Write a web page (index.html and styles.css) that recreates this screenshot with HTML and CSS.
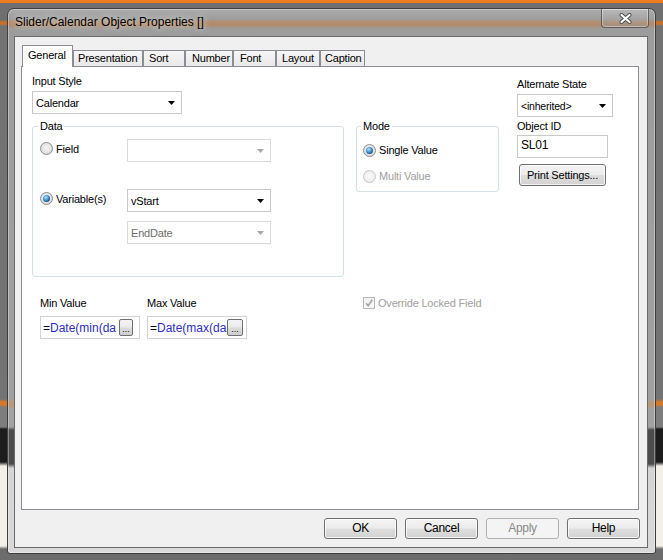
FILE: index.html
```html
<!DOCTYPE html>
<html>
<head>
<meta charset="utf-8">
<title>Slider/Calendar Object Properties</title>
<link rel="stylesheet" href="styles.css">
</head>
<body>
<div class="window">
  <div class="titlebar">
    <div class="title">Slider/Calendar Object Properties []</div>
    <div class="close">
      <svg width="13" height="11" viewBox="0 0 13 11">
        <path d="M2.5 2 L10.5 9 M10.5 2 L2.5 9" stroke="#4a4a4a" stroke-width="4" stroke-linecap="round"/>
        <path d="M2.5 2 L10.5 9 M10.5 2 L2.5 9" stroke="#ffffff" stroke-width="2.2" stroke-linecap="round"/>
      </svg>
    </div>
  </div>
  <div class="client">
    <div class="tabs">
      <div class="tab tab-active w-general">General</div>
      <div class="tab w-presentation">Presentation</div>
      <div class="tab w-sort">Sort</div>
      <div class="tab w-number">Number</div>
      <div class="tab w-font">Font</div>
      <div class="tab w-layout">Layout</div>
      <div class="tab w-caption">Caption</div>
    </div>
    <div class="panel">
      <div class="input-style">
        <div class="label">Input Style</div>
        <div class="combo combo-calendar">
          <span class="combo-text">Calendar</span>
          <svg class="arrow" width="7" height="4" viewBox="0 0 7 4"><polygon points="0,0 7,0 3.5,4" fill="#000"/></svg>
        </div>
      </div>

      <div class="right-col">
        <div class="label">Alternate State</div>
        <div class="combo combo-state">
          <span class="combo-text small">&lt;inherited&gt;</span>
          <svg class="arrow" width="7" height="4" viewBox="0 0 7 4"><polygon points="0,0 7,0 3.5,4" fill="#000"/></svg>
        </div>
        <div class="label label-gap">Object ID</div>
        <div class="textbox">SL01</div>
        <div class="btn btn-print">Print Settings...</div>
      </div>

      <fieldset class="group group-data">
        <legend>Data</legend>
        <div class="data-grid">
          <div class="opt">
            <span class="radio"></span><span class="opt-label">Field</span>
          </div>
          <div class="combo combo-disabled">
            <span class="combo-text"></span>
            <svg class="arrow" width="7" height="4" viewBox="0 0 7 4"><polygon points="0,0 7,0 3.5,4" fill="#a8a8a8"/></svg>
          </div>

          <div class="opt row-var">
            <span class="radio radio-on"></span><span class="opt-label">Variable(s)</span>
          </div>
          <div class="combo row-var">
            <span class="combo-text">vStart</span>
            <svg class="arrow" width="7" height="4" viewBox="0 0 7 4"><polygon points="0,0 7,0 3.5,4" fill="#000"/></svg>
          </div>

          <div class="row-end"></div>
          <div class="combo combo-disabled row-end">
            <span class="combo-text text-disabled">EndDate</span>
            <svg class="arrow" width="7" height="4" viewBox="0 0 7 4"><polygon points="0,0 7,0 3.5,4" fill="#a8a8a8"/></svg>
          </div>
        </div>
      </fieldset>

      <fieldset class="group group-mode">
        <legend>Mode</legend>
        <div class="opt">
          <span class="radio radio-on"></span><span class="opt-label">Single Value</span>
        </div>
        <div class="opt opt-second">
          <span class="radio radio-disabled"></span><span class="opt-label text-disabled2">Multi Value</span>
        </div>
      </fieldset>

      <div class="minmax">
        <div class="mm">
          <div class="label">Min Value</div>
          <div class="expr expr-min">
            <span class="expr-text"><span class="eq">=</span>Date(min(da</span>
            <span class="dots">...</span>
          </div>
        </div>
        <div class="mm">
          <div class="label">Max Value</div>
          <div class="expr expr-max">
            <span class="expr-text"><span class="eq">=</span>Date(max(da</span>
            <span class="dots">...</span>
          </div>
        </div>
      </div>

      <div class="override">
        <span class="checkbox">
          <svg width="10" height="10" viewBox="0 0 10 10"><path d="M2 5.2 L4.2 7.6 L8.2 1.8" fill="none" stroke="#a4a4a4" stroke-width="1.6"/></svg>
        </span>
        <span class="opt-label text-disabled2">Override Locked Field</span>
      </div>
    </div>
    <div class="buttons">
      <div class="btn btn-main">OK</div>
      <div class="btn btn-main">Cancel</div>
      <div class="btn btn-main btn-disabled">Apply</div>
      <div class="btn btn-main">Help</div>
    </div>
  </div>
</div>
</body>
</html>
```

FILE: styles.css
```css
html, body {
  margin: 0;
  padding: 0;
}

body {
  width: 663px;
  height: 560px;
  overflow: hidden;
  box-sizing: border-box;
  padding: 8px 0 0 7px;
  font-family: "Liberation Sans", Arial, sans-serif;
  font-size: 11px;
  letter-spacing: -0.2px;
  color: #000;
  background: linear-gradient(to bottom,
    #ee7c1e 0, #ee7c1e 3px,
    #6f6f6f 3px, #6f6f6f 20px,
    #c8702a 22px, #c8702a 24px,
    #727272 26px, #737373 399px,
    #d57a2a 402px, #d57a2a 405px,
    #7d7d7d 407px, #7d7d7d 427px,
    #1c1c1c 429px, #1c1c1c 462px,
    #f3f0ea 466px, #f3f0ea 546px,
    #6c6c6c 549px, #6c6c6c 560px);
}

/* ---------- window frame ---------- */
.window {
  width: 649px;
  height: 546px;
  box-sizing: border-box;
  border: 1px solid #3e3e3e;
  border-radius: 7px 7px 3px 3px;
  padding: 0 7px 5px 6px;
  display: flex;
  flex-direction: column;
  box-shadow: inset 0 0 0 1px rgba(255, 255, 255, 0.35);
  background: linear-gradient(to bottom,
    #ababab 0, #9d9d9d 10px,
    #b38d6d 13px, #b08a6a 16px,
    #9c9c9c 20px, #a0a0a0 390px,
    #b99878 394px, #b99878 397px,
    #a2a2a2 400px, #a2a2a2 418px,
    #4c4c4c 421px, #4c4c4c 455px,
    #d4d4d4 459px, #d9d9d9 546px);
}

.titlebar {
  height: 27px;
  display: flex;
  align-items: flex-start;
  flex: none;
}

.title {
  margin-top: 5px;
  padding-left: 1px;
  line-height: 16px;
  font-family: "Liberation Sans Narrow", "Liberation Sans", Arial, sans-serif;
  font-size: 12px;
  letter-spacing: 0;
  color: #000;
  text-shadow: 0 0 6px rgba(230, 230, 230, 0.9), 0 0 10px rgba(220, 220, 220, 0.8);
}

.close {
  margin-left: auto;
  margin-right: -1px;
  width: 48px;
  height: 19px;
  box-sizing: border-box;
  border: 1px solid rgba(70, 70, 70, 0.75);
  border-top: none;
  border-radius: 0 0 4px 4px;
  background: linear-gradient(to bottom, rgba(200, 200, 200, 0.45), rgba(150, 150, 150, 0.35));
  box-shadow: inset 0 0 0 1px rgba(255, 255, 255, 0.35);
  display: flex;
  align-items: center;
  justify-content: center;
}

/* ---------- client area ---------- */
.client {
  height: 512px;
  box-sizing: border-box;
  border: 1px solid #6a6a6a;
  background: #f0f0f0;
  padding: 8px 8px 0 6px;
  display: flex;
  flex-direction: column;
}

.tabs {
  height: 21px;
  display: flex;
  align-items: flex-end;
  margin-left: 1px;
  position: relative;
  z-index: 1;
  flex: none;
}

.tab {
  height: 16px;
  box-sizing: border-box;
  border: 1px solid #898c95;
  border-bottom: none;
  padding: 0 0 0 5px;
  line-height: 15px;
  background: linear-gradient(to bottom, #f6f6f6, #e8e8e8);
  white-space: nowrap;
}

.tab-active {
  height: 22px;
  margin-bottom: -1px;
  padding-top: 2px;
  line-height: 14px;
  background: #fff;
}

.w-general { width: 51px; }
.w-presentation { width: 70px; padding-left: 4px; }
.w-sort { width: 42px; }
.w-number { width: 48px; padding-left: 6px; }
.w-font { width: 43px; padding-left: 6px; }
.w-layout { width: 44px; }
.w-caption { width: 45px; padding-left: 4px; }

.panel {
  height: 444px;
  box-sizing: border-box;
  border: 1px solid #898c95;
  background: #fff;
  padding: 7px 0 0 10px;
  display: grid;
  grid-template-columns: 312px 143px 96px;
  grid-template-rows: auto auto auto;
  column-gap: 12px;
  align-content: start;
  align-items: start;
  flex: none;
}

.label {
  line-height: 14px;
  white-space: nowrap;
}

/* ---------- combos & inputs ---------- */
.combo {
  height: 23px;
  box-sizing: border-box;
  border: 1px solid #c9c9c9;
  background: #fff;
  display: flex;
  align-items: center;
  padding: 0 6px 0 3px;
}

.combo-text {
  flex: 1;
  white-space: nowrap;
  overflow: hidden;
}

.combo-text.small {
  font-size: 10.5px;
}

.combo-disabled {
  border-color: #d9d9d9;
}

.text-disabled {
  color: #6d6d6d;
}

.text-disabled2 {
  color: #a0a0a0;
}

.arrow {
  flex: none;
  display: block;
}

.input-style {
  grid-column: 1;
  grid-row: 1;
}

.combo-calendar {
  width: 150px;
  margin-top: 3px;
}

/* ---------- right column ---------- */
.right-col {
  grid-column: 3;
  grid-row: 1 / span 2;
  margin-left: 6px;
  padding-top: 3px;
}

.combo-state {
  width: 96px;
  margin-top: 3px;
}

.label-gap {
  margin-top: 2px;
}

.textbox {
  width: 91px;
  height: 23px;
  box-sizing: border-box;
  border: 1px solid #c9c9c9;
  margin-top: 2px;
  padding: 0 0 0 3px;
  line-height: 19px;
  font-size: 12px;
}

.btn {
  box-sizing: border-box;
  border: 1px solid #707070;
  border-radius: 3px;
  background: linear-gradient(to bottom, #f4f4f4 0%, #ececec 48%, #dedede 52%, #d2d2d2 100%);
  box-shadow: inset 0 0 0 1px rgba(255, 255, 255, 0.75);
  text-align: center;
  white-space: nowrap;
}

.btn-print {
  width: 87px;
  height: 22px;
  line-height: 20px;
  margin: 6px 0 0 2px;
}

/* ---------- group boxes ---------- */
.group {
  margin: 5px 0 0 0;
  padding: 0;
  border: 1px solid #d5dfe5;
  border-radius: 3px;
  min-width: 0;
  box-sizing: border-box;
}

.group legend {
  padding: 0 2px;
  margin-left: -2px;
  line-height: 14px;
}

.group-data {
  grid-column: 1;
  grid-row: 2;
  width: 312px;
  padding: 6px 0 32px 7px;
}

.group-mode {
  grid-column: 2;
  grid-row: 2;
  width: 143px;
  padding: 10px 0 8px 6px;
}

.data-grid {
  display: grid;
  grid-template-columns: 87px 144px;
  align-items: start;
}

.data-grid .combo {
  width: 144px;
}

.opt {
  display: flex;
  align-items: center;
  height: 14px;
  line-height: 14px;
  white-space: nowrap;
}

.data-grid .opt {
  margin-top: 3px;
  height: 13px;
}

.row-var {
  margin-top: 27px;
}

.data-grid .opt.row-var {
  margin-top: 30px;
}

.row-end {
  margin-top: 9px;
}

.opt-second {
  margin-top: 12px;
}

.opt-label {
  margin-left: 3px;
}

.radio {
  width: 13px;
  height: 13px;
  box-sizing: border-box;
  border-radius: 50%;
  border: 1px solid #8a8c8e;
  background: radial-gradient(circle at 50% 45%, #f6f6f6 0, #e4e4e4 55%, #cfcfcf 100%);
  display: flex;
  align-items: center;
  justify-content: center;
  flex: none;
}

.radio-on::after {
  content: "";
  width: 7px;
  height: 7px;
  border-radius: 50%;
  background: radial-gradient(circle at 40% 35%, #b4e6fb 0, #4c9ad6 40%, #1a4f82 75%, #0e3460 100%);
}

.radio-disabled {
  border-color: #c6c6c6;
  background: radial-gradient(circle at 50% 45%, #fafafa 0, #efefef 60%, #e2e2e2 100%);
}

/* ---------- min / max ---------- */
.minmax {
  grid-column: 1;
  grid-row: 3;
  margin-top: 19px;
  padding-left: 8px;
  display: flex;
  gap: 7px;
}

.mm .label {
  line-height: 14px;
}

.expr {
  width: 100px;
  height: 23px;
  margin-top: 6px;
  box-sizing: border-box;
  border: 1px solid #d2d2d2;
  background: #fff;
  display: flex;
  align-items: center;
  padding-left: 2px;
}

.expr-text {
  flex: 1;
  min-width: 0;
  overflow: hidden;
  white-space: nowrap;
  font-size: 12px;
  letter-spacing: 0;
  color: #2d2dc4;
}

.eq {
  color: #000;
}

.dots {
  flex: none;
  width: 14px;
  height: 17px;
  box-sizing: border-box;
  border: 1px solid #6f6f6f;
  border-radius: 2px;
  background: linear-gradient(to bottom, #f4f4f4 0%, #ebebeb 48%, #dcdcdc 52%, #cfcfcf 100%);
  font-size: 9px;
  line-height: 18px;
  letter-spacing: 0;
  text-align: center;
  color: #000;
  overflow: hidden;
}

.expr-min .dots {
  margin-right: 6px;
}

.expr-max .dots {
  width: 16px;
  margin-right: 3px;
}

/* ---------- override ---------- */
.override {
  grid-column: 2;
  grid-row: 3;
  margin-top: 19px;
  padding-left: 7px;
  display: flex;
  align-items: center;
  height: 14px;
  white-space: nowrap;
}

.checkbox {
  width: 12px;
  height: 12px;
  box-sizing: border-box;
  border: 1px solid #b9b9b9;
  background: linear-gradient(to bottom, #f0f0f0, #fbfbfb);
  display: flex;
  align-items: center;
  justify-content: center;
  flex: none;
}

.checkbox svg {
  display: block;
}

/* ---------- bottom buttons ---------- */
.buttons {
  margin-top: 8px;
  margin-right: -1px;
  display: flex;
  justify-content: flex-end;
  gap: 8px;
  flex: none;
}

.btn-main {
  width: 73px;
  height: 21px;
  line-height: 19px;
  font-size: 12px;
  letter-spacing: -0.3px;
}

.btn-disabled {
  border-color: #adb2b5;
  background: #f4f4f4;
  box-shadow: none;
  color: #8a8a8a;
}
```
